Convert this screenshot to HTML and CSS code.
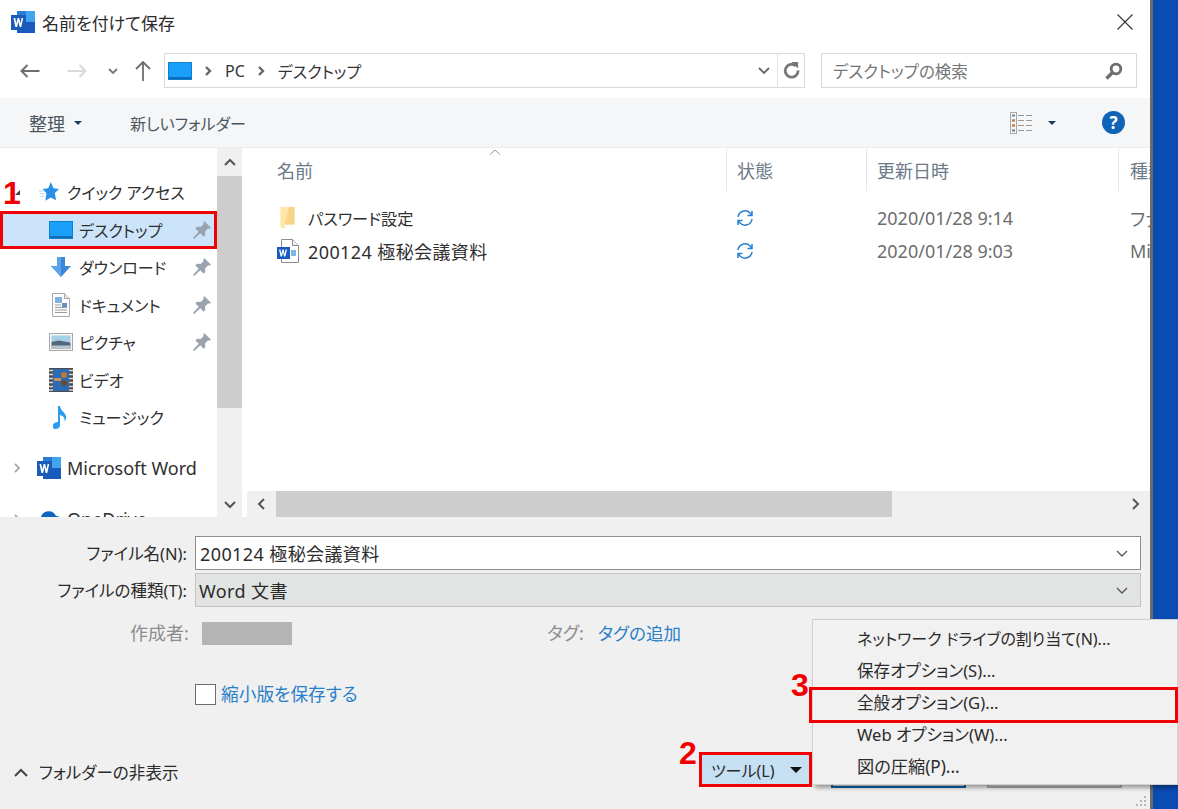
FILE: index.html
```html
<!DOCTYPE html>
<html lang="ja">
<head>
    <meta charset="UTF-8" />
    <title>名前を付けて保存</title>
    <link rel="stylesheet" href="styles.css">
</head>
<body>
    <svg class="defs" xmlns="http://www.w3.org/2000/svg">
        <symbol id="word" viewBox="0 0 26 24">
            <rect x="7" y="1" width="18" height="22" fill="#2b7cd3" />
            <rect x="16" y="1" width="9" height="22" fill="#41a5ee" />
            <rect x="7" y="12" width="18" height="11" fill="#185abd" />
            <rect x="1" y="5" width="15" height="15" fill="#1a5cb8" />
            <path d="M3.5 8h1.700l1.100 5.600L7.600 8h1.600l1.300 5.600L11.600 8h1.600l-1.900 9H9.700L8.400 11.500 7.100 17H5.400z" fill="#fff" />
        </symbol>
        <symbol id="desktop" viewBox="0 0 24 18">
            <rect x="0.500" y="0.500" width="23" height="17" fill="#1a9ffa" />
            <rect x="0.500" y="15" width="23" height="2.500" fill="#0f6cb8" />
            <rect x="0.500" y="0.500" width="23" height="17" fill="none" stroke="#0f7fd0" />
        </symbol>
        <symbol id="star" viewBox="0 0 22 22">
            <path d="M13 0l3 6.800 6 .8-4.500 4.600 1.200 7.800L13 17 7 20.500l1.200-7.800-4-5 6-.8z" fill="#2a8fe6" />
            <path d="M0 10h5M1 13h5M2 16h4" stroke="#a9d3f5" stroke-width="1" />
        </symbol>
        <symbol id="download" viewBox="0 0 20 20">
            <path d="M6 0h8v9h6L10 20 0 9h6z" fill="#3d86d6" />
            <path d="M6 0h4v20L0 9h6z" fill="#5ba4ea" />
        </symbol>
        <symbol id="document" viewBox="0 0 18 24">
            <path d="M.5.5h12l5 5v18H.5z" fill="#fdfdfd" stroke="#a9a9a9" />
            <path d="M12.500.5v5h5" fill="#e2e2e2" stroke="#a9a9a9" />
            <rect x="3" y="4" width="7" height="6" fill="#7fb2dc" />
            <rect x="10" y="10" width="5" height="4" fill="#5f93c4" />
            <path d="M3 12h6M3 14.500h12M3 17h12M3 19.500h12" stroke="#9a9a9a" />
        </symbol>
        <symbol id="picture" viewBox="0 0 24 18">
            <rect x="0.500" y="0.500" width="23" height="17" fill="#f5f5f5" stroke="#a8a8a8" />
            <rect x="2.500" y="2.500" width="19" height="7" fill="#a8cfe8" />
            <path d="M2.500 9l7-1.500 12 2V15.500h-19z" fill="#53697a" />
            <rect x="2.500" y="12.500" width="19" height="3" fill="#b9c7d0" />
        </symbol>
        <symbol id="video" viewBox="0 0 24 24">
            <rect width="24" height="24" fill="#4c4c4c" />
            <rect x="4" y="1" width="16" height="22" fill="#2d6cb4" />
            <path d="M0 2.500h4M0 6.500h4M0 10.500h4M0 14.500h4M0 18.500h4M0 22h4M20 2.500h4M20 6.500h4M20 10.500h4M20 14.500h4M20 18.500h4M20 22h4" stroke="#d8d8d8" stroke-width="1.500" />
            <circle cx="15" cy="7" r="3" fill="#b9793a" />
            <circle cx="15" cy="15" r="3" fill="#6b4a2a" />
            <rect x="5" y="10" width="7" height="3" fill="#c59060" />
        </symbol>
        <symbol id="note" viewBox="0 0 18 24">
            <path d="M6 1h2c.6 4 3 5 5 8s1 6-.5 7.500c.6-3-.500-5.500-4.500-6.500v10c0 2.500-2 4-4.500 4S1 22.500 1 20.500 3.200 17 6 17z" fill="#2b9bef" />
        </symbol>
        <symbol id="cloud" viewBox="0 0 26 18">
            <path d="M6 17a5 5 0 0 1-1-9.900A8 8 0 0 1 20 6a5.500 5.500 0 0 1 1 11z" fill="#0f64c0" />
        </symbol>
        <symbol id="pin" viewBox="0 0 16 16">
            <path d="M10 0l6 6-1.500.8-1-.3-2.800 2.800.2 3.200-1.400 1.400-3-3L1.500 15.500 0 16l.5-1.500 4.600-4.900-3-3L3.500 5.200l3.200.2 2.800-2.800-.3-1z" fill="#9aa3ad" />
        </symbol>
        <symbol id="folder" viewBox="0 0 16 22">
            <path d="M1 1l13 0v16l-9 0v4l-4-2z" fill="#ffe6a6" />
            <path d="M9 1h5v16H5z" fill="#f7d488" />
        </symbol>
        <symbol id="wordfile" viewBox="0 0 22 24">
            <path d="M4.500.5h11l6 6v17h-17z" fill="#fff" stroke="#8d8d8d" />
            <path d="M15.500.5v6h6" fill="#eee" stroke="#8d8d8d" />
            <rect x="14" y="11" width="5" height="6" fill="#7fb6ea" />
            <rect x="0" y="8" width="13" height="12" fill="#185abd" />
            <path d="M2 10.500h1.500l.9 4.500 1-4.500h1.300l1 4.500.9-4.500H10l-1.600 7H7L6 13l-1 4.500H3.600z" fill="#fff" />
        </symbol>
        <symbol id="sync" viewBox="0 0 18 18">
            <path d="M2 8a7 7 0 0 1 12-4l2 2M16 2v4.500h-4.500M16 10a7 7 0 0 1-12 4l-2-2M2 16v-4.500h4.500" fill="none" stroke="#2a7fd0" stroke-width="1.500" />
        </symbol>
    </svg>

    <div class="screen">
        <div class="dialog">
            <div class="title-bar">
                <svg class="title-icon"><use href="#word" /></svg>
                <span class="title-text">名前を付けて保存</span>
                <svg class="close-icon" viewBox="0 0 16 16"><path d="M.5.5l15 15M15.500.5l-15 15" stroke="#333" stroke-width="1.100" /></svg>
            </div>

            <div class="nav-bar">
                <svg class="nav-btn back" viewBox="0 0 20 14"><path d="M8 1L2 7l6 6M2 7h18" fill="none" stroke="#6d6d6d" stroke-width="2" /></svg>
                <svg class="nav-btn forward" viewBox="0 0 20 14"><path d="M12 1l6 6-6 6M18 7H0" fill="none" stroke="#d8d8d8" stroke-width="2" /></svg>
                <svg class="nav-btn recent" viewBox="0 0 10 6"><path d="M1 1l4 4 4-4" fill="none" stroke="#777" stroke-width="1.800" /></svg>
                <svg class="nav-btn up" viewBox="0 0 16 20"><path d="M1 8l7-7 7 7M8 1v19" fill="none" stroke="#6d6d6d" stroke-width="1.800" /></svg>
                <div class="address">
                    <svg class="address-icon"><use href="#desktop" /></svg>
                    <svg class="crumb-arrow" viewBox="0 0 7 10"><path d="M1 1l4 4-4 4" fill="none" stroke="#666" stroke-width="2.400" /></svg>
                    <span class="crumb">PC</span>
                    <svg class="crumb-arrow" viewBox="0 0 7 10"><path d="M1 1l4 4-4 4" fill="none" stroke="#666" stroke-width="2.400" /></svg>
                    <span class="crumb">デスクトップ</span>
                    <svg class="address-drop" viewBox="0 0 12 8"><path d="M1 1l5 5 5-5" fill="none" stroke="#666" stroke-width="1.800" /></svg>
                    <div class="refresh">
                        <svg viewBox="0 0 18 18"><path d="M13.500 4A6.800 6.800 0 1 0 16 9" fill="none" stroke="#777" stroke-width="3" /><path d="M9 0h7v7z" fill="#777" /></svg>
                    </div>
                </div>
                <div class="search">
                    <span>デスクトップの検索</span>
                    <svg viewBox="0 0 18 18"><circle cx="11" cy="7" r="4.800" fill="none" stroke="#6d6d6d" stroke-width="2.800" /><path d="M7.500 10.500L1.500 16.500" stroke="#6d6d6d" stroke-width="3.400" /></svg>
                </div>
            </div>

            <div class="command-bar">
                <span class="command organize">整理</span>
                <i class="caret dark"></i>
                <span class="command new-folder">新しいフォルダー</span>
                <svg class="view-icon" viewBox="0 0 22 22">
                    <rect x="0.500" y="0.500" width="6" height="21" fill="#f4f4f4" stroke="#a8a8a8" />
                    <path d="M2 3.500h3M2 8.500h3M2 13.500h3M2 18.500h3" stroke="#5b87b8" stroke-width="2" />
                    <path d="M2 8.500h3M2 13.500h3" stroke="#d9823a" stroke-width="2" />
                    <path d="M8 3.500h6M16 3.500h6M8 8.500h6M16 8.500h6M8 13.500h6M16 13.500h6M8 18.500h6M16 18.500h6" stroke="#9a9a9a" stroke-width="1.200" />
                </svg>
                <i class="caret dark view-caret"></i>
                <span class="help">?</span>
            </div>

            <div class="browser">
                <div class="sidebar">
                    <div class="tree">
                        <div class="tree-row top-row">
                            <svg class="expander open" viewBox="0 0 7 7"><path d="M6 1v5H1z" fill="#444" /></svg>
                            <svg class="icon star"><use href="#star" /></svg>
                            <span>クイック アクセス</span>
                        </div>
                        <div class="tree-row sub selected">
                            <svg class="icon"><use href="#desktop" /></svg>
                            <span>デスクトップ</span>
                            <svg class="pin"><use href="#pin" /></svg>
                        </div>
                        <div class="tree-row sub">
                            <svg class="icon"><use href="#download" /></svg>
                            <span>ダウンロード</span>
                            <svg class="pin"><use href="#pin" /></svg>
                        </div>
                        <div class="tree-row sub">
                            <svg class="icon tall"><use href="#document" /></svg>
                            <span>ドキュメント</span>
                            <svg class="pin"><use href="#pin" /></svg>
                        </div>
                        <div class="tree-row sub">
                            <svg class="icon"><use href="#picture" /></svg>
                            <span>ピクチャ</span>
                            <svg class="pin"><use href="#pin" /></svg>
                        </div>
                        <div class="tree-row sub">
                            <svg class="icon tall"><use href="#video" /></svg>
                            <span>ビデオ</span>
                        </div>
                        <div class="tree-row sub">
                            <svg class="icon tall"><use href="#note" /></svg>
                            <span>ミュージック</span>
                        </div>
                        <div class="tree-row top-row group">
                            <svg class="expander" viewBox="0 0 7 10"><path d="M1 1l4 4-4 4" fill="none" stroke="#aaa" stroke-width="1.800" /></svg>
                            <svg class="icon star wide"><use href="#word" /></svg>
                            <span>Microsoft Word</span>
                        </div>
                        <div class="tree-row top-row group">
                            <svg class="expander" viewBox="0 0 7 10"><path d="M1 1l4 4-4 4" fill="none" stroke="#aaa" stroke-width="1.800" /></svg>
                            <svg class="icon star wide"><use href="#cloud" /></svg>
                            <span>OneDrive</span>
                        </div>
                    </div>
                    <div class="v-scroll">
                        <div class="scroll-btn"><svg viewBox="0 0 12 8"><path d="M1 7l5-5 5 5" fill="none" stroke="#555" stroke-width="2" /></svg></div>
                        <div class="v-thumb"></div>
                        <div class="scroll-btn bottom"><svg viewBox="0 0 12 8"><path d="M1 1l5 5 5-5" fill="none" stroke="#555" stroke-width="2" /></svg></div>
                    </div>
                </div>

                <div class="files">
                    <div class="file-head">
                        <div class="col col-name">名前<svg class="sort" viewBox="0 0 12 6"><path d="M1 5.500L6 1l5 4.500" fill="none" stroke="#999" /></svg></div>
                        <div class="col col-state">状態</div>
                        <div class="col col-date">更新日時</div>
                        <div class="col col-type">種類</div>
                    </div>
                    <div class="file-row first">
                        <div class="col col-name"><svg class="file-icon"><use href="#folder" /></svg><span class="kana-name">パスワード設定</span></div>
                        <div class="col col-state"><svg class="sync"><use href="#sync" /></svg></div>
                        <div class="col col-date">2020/01/28 9:14</div>
                        <div class="col col-type">ファイル</div>
                    </div>
                    <div class="file-row">
                        <div class="col col-name"><svg class="file-icon"><use href="#wordfile" /></svg><span class="dark-text">200124 極秘会議資料</span></div>
                        <div class="col col-state"><svg class="sync"><use href="#sync" /></svg></div>
                        <div class="col col-date">2020/01/28 9:03</div>
                        <div class="col col-type">Microsoft</div>
                    </div>
                    <div class="h-scroll">
                        <svg class="h-arrow" viewBox="0 0 8 12"><path d="M7 1L2 6l5 5" fill="none" stroke="#555" stroke-width="2" /></svg>
                        <div class="h-track"><div class="h-thumb"></div></div>
                        <svg class="h-arrow" viewBox="0 0 8 12"><path d="M1 1l5 5-5 5" fill="none" stroke="#555" stroke-width="2" /></svg>
                    </div>
                </div>
            </div>

            <div class="save-panel">
                <div class="form-row">
                    <label>ファイル名(N):</label>
                    <div class="combo">
                        <span>200124 極秘会議資料</span>
                        <svg viewBox="0 0 12 7"><path d="M1 1l5 5 5-5" fill="none" stroke="#555" stroke-width="1.300" /></svg>
                    </div>
                </div>
                <div class="form-row type-row">
                    <label>ファイルの種類(T):</label>
                    <div class="combo disabled">
                        <span>Word 文書</span>
                        <svg viewBox="0 0 12 7"><path d="M1 1l5 5 5-5" fill="none" stroke="#555" stroke-width="1.300" /></svg>
                    </div>
                </div>
                <div class="meta-row">
                    <label class="muted">作成者:</label>
                    <div class="author-mask"></div>
                    <span class="muted tag-label">タグ:</span>
                    <a class="link tag-link">タグの追加</a>
                </div>
                <div class="thumb-row">
                    <span class="checkbox"></span>
                    <a class="link">縮小版を保存する</a>
                </div>
                <div class="panel-foot">
                    <div class="hide-folders">
                        <svg viewBox="0 0 14 9"><path d="M1 8l6-6 6 6" fill="none" stroke="#444" stroke-width="2" /></svg>
                        <span>フォルダーの非表示</span>
                    </div>
                    <div class="tools-btn">
                        <span>ツール(L)</span>
                        <i class="caret black"></i>
                    </div>
                    <div class="push-btn primary"></div>
                    <div class="push-btn"></div>
                </div>
                <svg class="grip" viewBox="0 0 12 12"><path d="M9 1h2v2H9zM5 5h2v2H5zM9 5h2v2H9zM1 9h2v2H1zM5 9h2v2H5zM9 9h2v2H9z" fill="#b5b5b5" /></svg>
            </div>
        </div>
        <div class="desktop-edge"></div>
    </div>

    <div class="menu">
        <div class="menu-item">ネットワーク ドライブの割り当て(N)...</div>
        <div class="menu-item mid">保存オプション(S)...</div>
        <div class="menu-item mid">全般オプション(G)...</div>
        <div class="menu-item mid">Web オプション(W)...</div>
        <div class="menu-item wide">図の圧縮(P)...</div>
    </div>

    <div class="mark mark-box-1"></div>
    <div class="mark mark-box-2"></div>
    <div class="mark mark-box-3"></div>
    <span class="step step-1">1</span>
    <span class="step step-2">2</span>
    <span class="step step-3">3</span>
</body>
</html>
```

FILE: styles.css
```css
* {
    box-sizing: border-box;
}

html, body {
    margin: 0;
    padding: 0;
    height: 809px;
    overflow: hidden;
}

body {
    position: relative;
    font-family: "Noto Sans", "Noto Sans CJK JP", sans-serif;
    font-feature-settings: "palt";
    font-size: 18px;
    color: #333;
    background: #0b4cb4;
}

.defs {
    position: absolute;
    width: 0;
    height: 0;
}

.screen {
    display: flex;
    height: 809px;
}

.dialog {
    width: 1150px;
    height: 809px;
    background: #fff;
    display: flex;
    flex-direction: column;
    flex-shrink: 0;
}

.desktop-edge {
    width: 28px;
    border-left: 3px solid #6b6b6b;
    background: #0b4cb4;
}

/* title */
.title-bar {
    height: 44px;
    display: flex;
    align-items: center;
    padding-left: 10px;
}

.title-icon {
    width: 26px;
    height: 24px;
    margin-right: 6px;
}

.title-text {
    color: #2b2b2b;
    font-size: 17px;
}

.close-icon {
    width: 16px;
    height: 16px;
    margin-left: auto;
    margin-right: 17px;
}

/* address row */
.nav-bar {
    height: 54px;
    display: flex;
    align-items: flex-start;
    padding-top: 9px;
}

.nav-btn {
    flex-shrink: 0;
    margin-top: 11px;
}

.back {
    width: 21px;
    height: 14px;
    margin-left: 19px;
}

.forward {
    width: 21px;
    height: 14px;
    margin-left: 27px;
}

.recent {
    width: 10px;
    height: 6px;
    margin-left: 20px;
    margin-top: 15px;
}

.up {
    width: 16px;
    height: 20px;
    margin-left: 17px;
    margin-top: 8px;
}

.address {
    width: 641px;
    height: 35px;
    margin-left: 13px;
    border: 1px solid #d9d9d9;
    display: flex;
    align-items: center;
    padding-left: 3px;
    font-size: 16px;
}

.address-icon {
    width: 24px;
    height: 18px;
}

.crumb-arrow {
    width: 7px;
    height: 10px;
    margin: 0 13px;
}

.address-drop {
    width: 12px;
    height: 8px;
    margin-left: auto;
    margin-right: 7px;
}

.refresh {
    width: 27px;
    height: 33px;
    border-left: 1px solid #e2e2e2;
    display: flex;
    align-items: center;
    justify-content: center;
}

.refresh svg {
    width: 17px;
    height: 17px;
}

.search {
    width: 316px;
    height: 35px;
    margin-left: 16px;
    border: 1px solid #d9d9d9;
    display: flex;
    align-items: center;
    justify-content: space-between;
    padding: 0 13px 0 11px;
    color: #767676;
    font-size: 16.500px;
}

.search svg {
    width: 18px;
    height: 18px;
}

/* command bar */
.command-bar {
    height: 50px;
    background: #f5f6f7;
    border-bottom: 1px solid #ececec;
    display: flex;
    align-items: center;
    color: #4a5560;
}

.organize {
    margin-left: 29px;
}

.caret {
    width: 0;
    height: 0;
    border-left: 4px solid transparent;
    border-right: 4px solid transparent;
    border-top: 4px solid #1e3a66;
}

.dark {
    margin-left: 9px;
}

.new-folder {
    margin-left: 48px;
    font-size: 16px;
}

.view-icon {
    width: 22px;
    height: 22px;
    margin-left: auto;
}

.view-caret {
    margin-left: 16px;
}

.help {
    width: 23px;
    height: 23px;
    border-radius: 50%;
    background: #0f63b8;
    color: #fff;
    font-size: 17px;
    font-weight: bold;
    line-height: 23px;
    text-align: center;
    margin-left: 46px;
    margin-right: 25px;
}

/* tree and file list */
.browser {
    height: 369px;
    display: flex;
    overflow: hidden;
}

.sidebar {
    width: 247px;
    flex-shrink: 0;
    display: flex;
}

.tree {
    width: 217px;
    padding-top: 25.500px;
    overflow: hidden;
}

.tree-row {
    height: 37.500px;
    display: flex;
    align-items: center;
    white-space: nowrap;
    color: #2f2f2f;
    font-size: 16px;
}

.top-row {
    padding-left: 14px;
}

.group {
    margin-top: 13.500px;
    font-size: 18px;
}

.expander {
    width: 7px;
    height: 10px;
    flex-shrink: 0;
}

.expander.open {
    height: 7px;
}

.icon {
    width: 24px;
    height: 20px;
    margin-right: 6px;
    flex-shrink: 0;
}

.icon.tall {
    height: 24px;
}

.star {
    margin-left: 16px;
    margin-right: 6px;
}

.star.wide {
    width: 26px;
    height: 24px;
    margin-left: 15px;
    margin-right: 5px;
}

.sub {
    padding-left: 49px;
}

.selected {
    background: #cce4f9;
}

.pin {
    width: 18px;
    height: 18px;
    margin-left: auto;
    margin-right: 6px;
}

.v-scroll {
    width: 25px;
    background: #f0f0f0;
    display: flex;
    flex-direction: column;
}

.scroll-btn {
    height: 28px;
    display: flex;
    align-items: center;
    justify-content: center;
}

.scroll-btn svg {
    width: 12px;
    height: 8px;
}

.v-thumb {
    height: 232px;
    background: #cdcdcd;
}

.scroll-btn.bottom {
    height: 24px;
    margin-top: auto;
}

.files {
    flex: 1;
    display: flex;
    flex-direction: column;
    min-width: 0;
    color: #6d6d6d;
}

.file-head,
.file-row {
    display: flex;
    align-items: center;
    white-space: nowrap;
}

.file-head {
    height: 42px;
    margin-top: 1px;
    color: #6c7a89;
}

.file-row {
    height: 33px;
}

.file-row.first {
    margin-top: 10px;
}

.col {
    height: 100%;
    display: flex;
    align-items: center;
    flex-shrink: 0;
    padding-left: 10px;
}

.col-name {
    width: 480px;
    padding-left: 30px;
    position: relative;
}

.col-state {
    width: 140px;
}

.col-date {
    width: 252px;
}

.col-type {
    width: 31px;
    overflow: hidden;
    padding-left: 11px;
}

.file-head .col {
    border-right: 1px solid #e5e5e5;
}

.file-head .col-type {
    border-right: none;
}

.sort {
    position: absolute;
    left: 242px;
    top: 0;
    width: 12px;
    height: 6px;
}

.file-icon {
    width: 22px;
    height: 24px;
    margin-right: 9px;
}

.dark-text {
    color: #2f2f2f;
    letter-spacing: 0.400px;
}

.kana-name {
    color: #2f2f2f;
    font-size: 16.200px;
}

.sync {
    width: 18px;
    height: 18px;
    margin-left: -1px;
}

.h-scroll {
    height: 26px;
    margin-top: auto;
    background: #f0f0f0;
    display: flex;
    align-items: center;
}

.h-arrow {
    width: 8px;
    height: 12px;
    margin: 0 10px;
    flex-shrink: 0;
}

.h-track {
    flex: 1;
    height: 100%;
    margin-left: 1px;
}

.h-thumb {
    width: 616px;
    height: 100%;
    background: #cdcdcd;
}

/* bottom panel */
.save-panel {
    height: 292px;
    background: #f0f0f0;
    padding-top: 19px;
    position: relative;
}

.form-row {
    display: flex;
    align-items: center;
}

.form-row label {
    width: 187px;
    text-align: right;
    white-space: nowrap;
    color: #2b2b2b;
    font-size: 16.500px;
}

.type-row {
    margin-top: 3px;
}

.combo {
    width: 946px;
    height: 34px;
    margin-left: 8px;
    background: #fff;
    border: 1px solid #8d8d8d;
    display: flex;
    align-items: center;
    justify-content: space-between;
    padding: 0 12px 0 4px;
    color: #2b2b2b;
    letter-spacing: 0.400px;
}

.combo svg {
    width: 12px;
    height: 7px;
}

.combo.disabled {
    background: #e2e4e3;
    border-color: #c4c4c4;
    padding-left: 3px;
}

.meta-row {
    display: flex;
    align-items: center;
    margin-top: 15px;
    height: 23px;
}

.muted {
    color: #8d8d8d;
    margin-top: -3px;
}

.meta-row label {
    margin-left: 130px;
    width: 60px;
    white-space: nowrap;
}

.author-mask {
    width: 90px;
    height: 23px;
    margin-left: 12px;
    background: #b4b4b4;
}

.tag-label {
    margin-left: 255px;
}

.tag-link {
    margin-left: 14px;
    font-size: 17.500px;
}

.link {
    color: #2a7fc9;
    margin-top: -3px;
}

.thumb-row {
    display: flex;
    align-items: center;
    margin-top: 38px;
    margin-left: 195px;
    height: 22px;
    font-size: 17.700px;
}

.checkbox {
    width: 21px;
    height: 21px;
    background: #fff;
    border: 1px solid #6d6d6d;
    margin-right: 5px;
}

.panel-foot {
    display: flex;
    align-items: flex-start;
    margin-top: 47px;
}

.hide-folders {
    display: flex;
    align-items: center;
    width: 686px;
    margin-left: 14px;
    margin-top: 3px;
    height: 34px;
    color: #2b2b2b;
    font-size: 16.600px;
}

.hide-folders svg {
    width: 14px;
    height: 9px;
    margin-right: 11px;
}

.tools-btn {
    width: 111px;
    height: 34px;
    background: #c5dff3;
    display: flex;
    align-items: center;
    justify-content: space-between;
    padding: 1px 9px 0 11px;
    color: #2b2b2b;
    font-size: 16px;
}

.caret.black {
    border-left-width: 6px;
    border-right-width: 6px;
    border-top: 6px solid #111;
}

.push-btn {
    width: 135px;
    height: 34px;
    margin-left: 21px;
    margin-top: 2px;
    background: #e1e1e1;
    border: 2px solid #adadad;
}

.push-btn.primary {
    margin-left: 20px;
    border-color: #0a64ad;
}

.grip {
    position: absolute;
    right: 3px;
    bottom: 2px;
    width: 12px;
    height: 12px;
}

/* tools menu */
.menu {
    position: absolute;
    left: 812px;
    top: 619px;
    width: 366px;
    height: 166px;
    padding-top: 3px;
    background: #f1f1f1;
    border: 1px solid #d0d0d0;
    box-shadow: 3px 3px 4px rgba(0, 0, 0, 0.35);
    font-size: 16px;
}

.menu-item {
    height: 32px;
    line-height: 32px;
    padding-left: 44px;
    white-space: nowrap;
    color: #2b2b2b;
}

.menu-item.mid {
    font-size: 16.600px;
}

.menu-item.wide {
    font-size: 17.200px;
}

/* red callouts */
.mark {
    position: absolute;
    border: 3px solid #f00000;
}

.mark-box-1 {
    left: 0;
    top: 211px;
    width: 217px;
    height: 38px;
}

.mark-box-2 {
    left: 699px;
    top: 752px;
    width: 113px;
    height: 35px;
}

.mark-box-3 {
    left: 809px;
    top: 687px;
    width: 369px;
    height: 36px;
}

.step {
    position: absolute;
    font-family: "Liberation Sans", sans-serif;
    font-weight: bold;
    font-size: 32px;
    line-height: 32px;
    color: #f00000;
}

.step-1 {
    left: 3px;
    top: 177px;
}

.step-2 {
    left: 679px;
    top: 737px;
}

.step-3 {
    left: 791px;
    top: 669px;
}
```
